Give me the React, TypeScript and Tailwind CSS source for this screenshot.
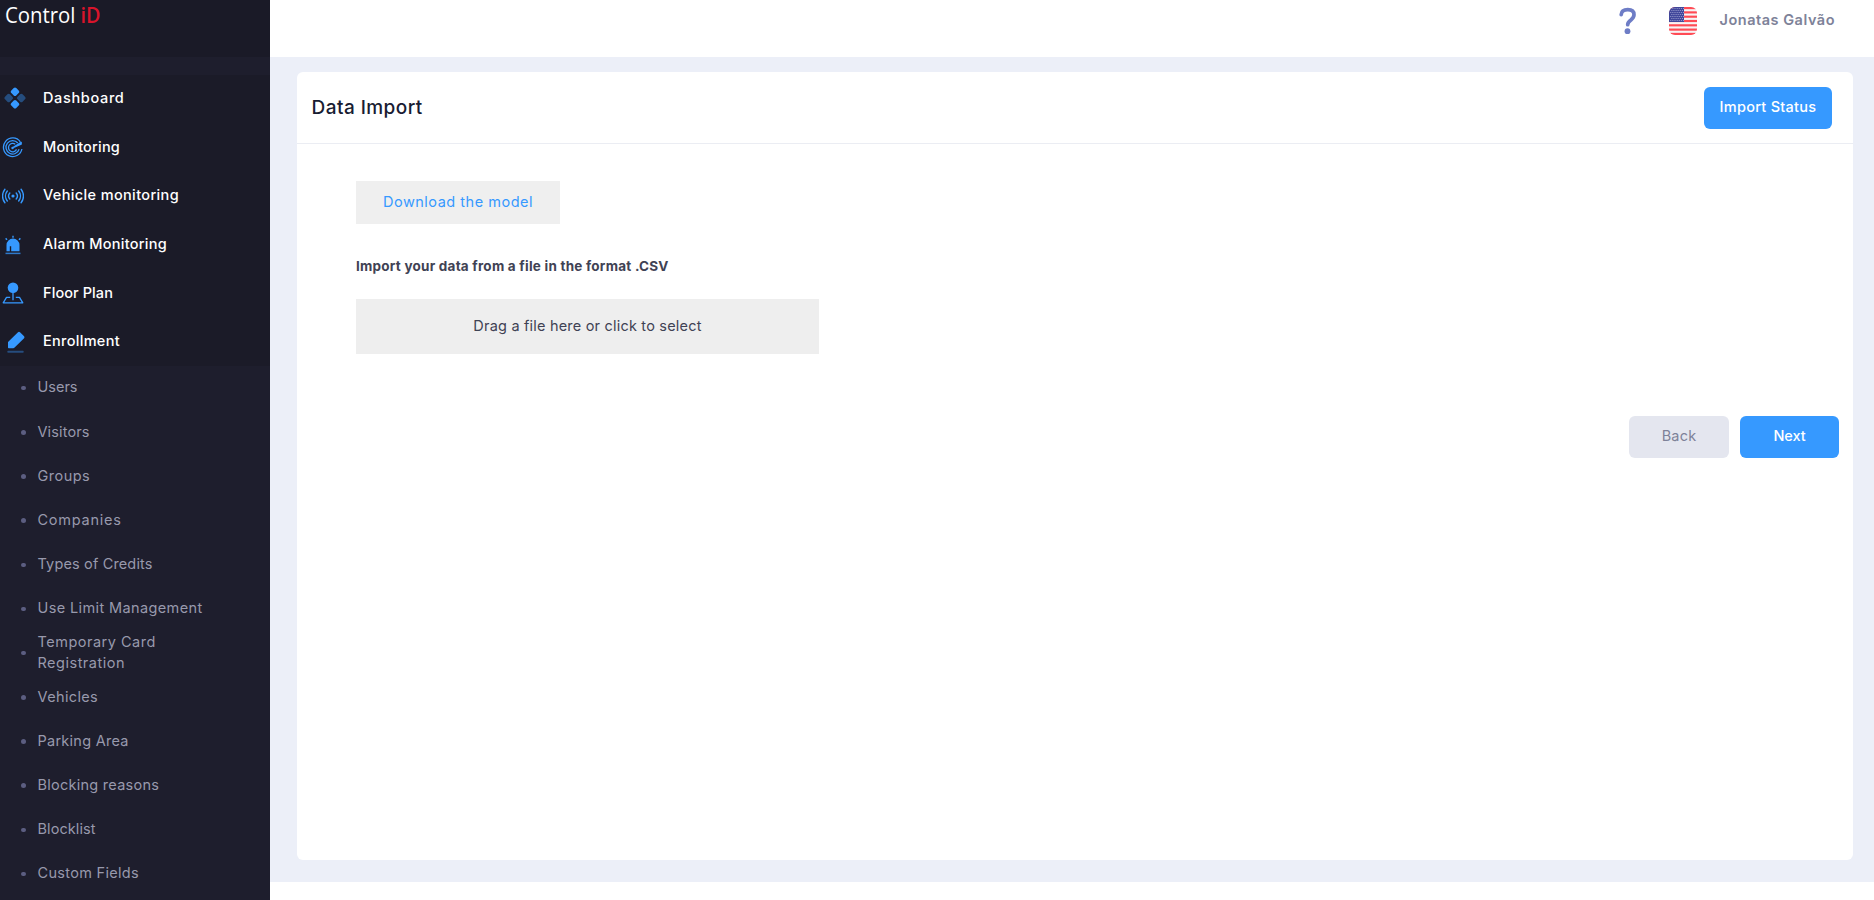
import type { ReactNode } from "react";

const BLUE = "#3699ff";

function DashboardIcon() {
  return (
    <svg width="22" height="22" viewBox="0 0 22 22" className="mb-[3px] ml-[3.5px]">
      <g fill={BLUE}>
        <rect x="7.5" y="1.2" width="7" height="7" rx="1.8" transform="rotate(45 11 4.7)" />
        <rect x="7.5" y="13.8" width="7" height="7" rx="1.8" transform="rotate(45 11 17.3)" />
        <g opacity="0.4">
          <rect x="1.2" y="7.5" width="7" height="7" rx="1.8" transform="rotate(45 4.7 11)" />
          <rect x="13.8" y="7.5" width="7" height="7" rx="1.8" transform="rotate(45 17.3 11)" />
        </g>
      </g>
    </svg>
  );
}

function RadarIcon() {
  return (
    <svg width="22" height="22" viewBox="0 0 22 22" className="ml-0.5" fill="none" stroke={BLUE} strokeWidth="1.3">
      <path d="M18.3 4.8A9.3 9.3 0 1 0 19.9 12" />
      <path d="M15.8 6A6.7 6.7 0 1 0 17.1 12.2" />
      <path d="M13.3 7.3A4.2 4.2 0 1 0 14.5 12.4" />
      <path d="M10.5 10.8L19.2 5.4V7.2Z" fill={BLUE} strokeLinejoin="round" />
      <circle cx="10.5" cy="11" r="1.2" fill={BLUE} stroke="none" />
    </svg>
  );
}

function SignalIcon() {
  return (
    <svg width="22" height="18" viewBox="0 0 22 18" className="ml-[1.5px]" fill="none" stroke={BLUE} strokeWidth="1.4" strokeLinecap="round">
      <circle cx="11" cy="9" r="1.6" fill={BLUE} stroke="none" />
      <path d="M7.8 6a4.6 4.6 0 0 0 0 6M5.3 4a8 8 0 0 0 0 10M2.9 2.2a11 11 0 0 0 0 13.6" />
      <path d="M14.2 6a4.6 4.6 0 0 1 0 6M16.7 4a8 8 0 0 1 0 10M19.1 2.2a11 11 0 0 1 0 13.6" />
    </svg>
  );
}

function SirenIcon() {
  return (
    <svg width="18" height="20" viewBox="0 0 18 20" className="ml-[3.5px]">
      <path d="M2.5 16.3V10a6.5 6.5 0 0 1 13 0v6.3H7.2v-5H5.8v5Z" fill={BLUE} />
      <path d="M1.5 18.4h15" stroke={BLUE} strokeWidth="1.5" opacity="0.75" />
      <path d="M9 .8v1.9M1.6 3.4l1.5 1.3M16.4 3.4l-1.5 1.3" stroke={BLUE} strokeWidth="1.4" />
    </svg>
  );
}

function PinIcon() {
  return (
    <svg width="22" height="22" viewBox="0 0 22 22" className="mb-0.5 ml-[1.5px]" fill="none" stroke={BLUE}>
      <circle cx="11" cy="5.8" r="5.3" fill={BLUE} stroke="none" />
      <path d="M11 10v8.3" strokeWidth="1.3" />
      <path d="M8.2 15.4H4.5L1.2 20.8h19.6l-3.3-5.4h-3.7" strokeWidth="1.3" strokeLinejoin="round" />
    </svg>
  );
}

function PencilIcon() {
  return (
    <svg width="20" height="22" viewBox="0 0 20 22" className="ml-[5.5px]">
      <path d="M2 16.6V11L12 1.2q1-.8 2 0L18.1 5.3q.8 1 0 2L8.6 16.6Q8 17.2 7.2 17.2H2.7Q2 17.2 2 16.6Z" fill={BLUE} />
      <rect x="1.5" y="19.8" width="16" height="1.9" rx=".5" fill={BLUE} opacity="0.4" />
    </svg>
  );
}

const menu: { label: string; icon: ReactNode; tracking: string }[] = [
  { label: "Dashboard", icon: <DashboardIcon />, tracking: "tracking-[0.65px]" },
  { label: "Monitoring", icon: <RadarIcon />, tracking: "tracking-[0.19px]" },
  { label: "Vehicle monitoring", icon: <SignalIcon />, tracking: "tracking-[0.36px]" },
  { label: "Alarm Monitoring", icon: <SirenIcon />, tracking: "tracking-[0.26px]" },
  { label: "Floor Plan", icon: <PinIcon />, tracking: "tracking-[0.09px]" },
  { label: "Enrollment", icon: <PencilIcon />, tracking: "tracking-[0.3px]" },
];

const submenu: { label: string; tracking: string }[] = [
  { label: "Users", tracking: "tracking-normal" },
  { label: "Visitors", tracking: "tracking-[0.12px]" },
  { label: "Groups", tracking: "tracking-[0.48px]" },
  { label: "Companies", tracking: "tracking-[0.76px]" },
  { label: "Types of Credits", tracking: "tracking-[0.15px]" },
  { label: "Use Limit Management", tracking: "tracking-[0.38px]" },
  { label: "Temporary Card Registration", tracking: "tracking-[0.5px]" },
  { label: "Vehicles", tracking: "tracking-[0.36px]" },
  { label: "Parking Area", tracking: "tracking-[0.26px]" },
  { label: "Blocking reasons", tracking: "tracking-[0.26px]" },
  { label: "Blocklist", tracking: "tracking-[0.08px]" },
  { label: "Custom Fields", tracking: "tracking-[0.31px]" },
];

function Logo() {
  return (
    <svg width="110" height="32" viewBox="0 0 110 32" className="block" fontFamily="'Open Sans', 'Noto Sans', sans-serif" fontSize="21.5">
      <text x="5" y="22.8" textLength="70.5" lengthAdjust="spacingAndGlyphs" fill="#ffffff">Control</text>
      <text x="80.5" y="22.8" textLength="20" lengthAdjust="spacingAndGlyphs" fontWeight="600" fill="#d8142b">iD</text>
    </svg>
  );
}

function Sidebar() {
  return (
    <aside className="flex w-[270px] shrink-0 flex-col overflow-hidden bg-[#1e1e2d]">
      <div className="h-[57px] shrink-0 bg-[#1a1a27]">
        <Logo />
      </div>
      <nav className="pt-[18px]">
        <ul className="h-[291px] bg-[#1b1b28]">
          {menu.map((item) => (
            <li key={item.label} className="flex h-[48.6px] items-center first:h-12">
              <span className="flex w-[43px] shrink-0 items-center pt-px">{item.icon}</span>
              <span className={`pb-[1.1px] text-[14.5px] leading-5 font-[450] text-white ${item.tracking}`}>{item.label}</span>
            </li>
          ))}
        </ul>
        <ul>
          {submenu.map((item) => (
            <li key={item.label} className="flex h-[44.18px] items-center pl-[21px]">
              <span className="h-[4.5px] w-[5px] shrink-0 rounded-full bg-[#5c5e81]" />
              <span className={`ml-[11.5px] w-[170px] pb-[2.3px] text-[14.5px] leading-[21px] text-[#9899ac] ${item.tracking}`}>{item.label}</span>
            </li>
          ))}
        </ul>
      </nav>
    </aside>
  );
}

function Flag() {
  const rows = [0, 1, 2, 3, 4, 5, 6];
  return (
    <svg width="28" height="28" viewBox="0 0 28 28" className="rounded-md">
      <rect width="28" height="28" fill="#f7f4f5" />
      {rows.map((r) => (
        <rect key={r} y={r * 4.308} width="28" height="2.154" fill="#ff4b55" />
      ))}
      <rect width="15" height="15" fill="#41479b" />
      {rows.map((r) =>
        rows.map((c) => (
          <circle key={`${r}-${c}`} cx={1.8 + c * 2.1 + (r % 2) * 1.05} cy={1.6 + r * 2} r={c === 6 && r % 2 ? 0 : 0.5} fill="#b9bbe0" />
        )),
      )}
    </svg>
  );
}

function Header() {
  return (
    <header className="flex h-[57px] shrink-0 items-start justify-end bg-white pr-[39px]">
      <svg width="18" height="28" viewBox="0 0 18 28" className="mt-[7px] mr-8" fill="none">
        <path d="M2.2 7.6C2.4 4.4 5 2.7 8.8 2.7c4 0 6.2 2 6.2 5.1 0 2.5-1.4 3.8-3.1 5.2-2 1.5-3.2 2.4-3.2 4.7" stroke="#6e7dc6" strokeWidth="3.7" strokeLinecap="round" />
        <circle cx="8.5" cy="24.2" r="2.9" fill="#6e7dc6" />
      </svg>
      <span className="mt-[7px] mr-[22.5px]">
        <Flag />
      </span>
      <span className="mt-2.5 text-[14.5px] leading-5 font-semibold tracking-[0.52px] text-[#7e8299]">Jonatas Galvão</span>
    </header>
  );
}

export default function App() {
  return (
    <div className="flex h-[900px] w-full overflow-hidden bg-white font-['Inter',sans-serif]">
      <Sidebar />
      <div className="flex min-w-0 flex-1 flex-col">
        <Header />
        <main className="flex h-[825px] flex-col bg-[#eceff8] pt-[15px] pr-[21px] pb-[22px] pl-[27px]">
          <section className="flex flex-1 flex-col rounded-md bg-white">
            <div className="flex h-[72px] items-start justify-between border-b border-[#ebedf3] pt-[15px] pr-[21px] pl-[14.5px]">
              <h1 className="mt-[7px] text-[19px] leading-7 font-[450] tracking-[0.45px] text-[#181c32]">Data Import</h1>
              <button className="h-[42px] w-32 rounded-md bg-[#3699ff] pb-0.5 text-[14.5px] font-[450] tracking-[0.27px] text-white">Import Status</button>
            </div>
            <div className="flex flex-col items-start pt-[37px] pl-[59px]">
              <button className="h-[43px] w-[204px] bg-[#efefef] pb-0.5 text-[14.5px] tracking-[0.51px] text-[#3699ff]">Download the model</button>
              <p className="mt-8 text-[13.5px] leading-5 font-bold tracking-[0.23px] text-[#3f4254]">Import your data from a file in the format .CSV</p>
              <div className="mt-[23px] flex h-[55px] w-[463px] items-center justify-center bg-[#eeeeee] pb-0.5 text-[14.5px] tracking-[0.2px] text-[#3f4254]">
                Drag a file here or click to select
              </div>
            </div>
            <div className="mt-[62px] flex justify-end gap-[11px] pr-[14px]">
              <button className="h-[42px] w-[100px] rounded-md bg-[#e4e6ef] pb-0.5 text-[14.5px] tracking-[0.2px] text-[#7e8299]">Back</button>
              <button className="h-[42px] w-[99px] rounded-md bg-[#3699ff] pb-0.5 text-[14.5px] font-[450] tracking-[-0.11px] text-white">Next</button>
            </div>
          </section>
        </main>
      </div>
    </div>
  );
}
